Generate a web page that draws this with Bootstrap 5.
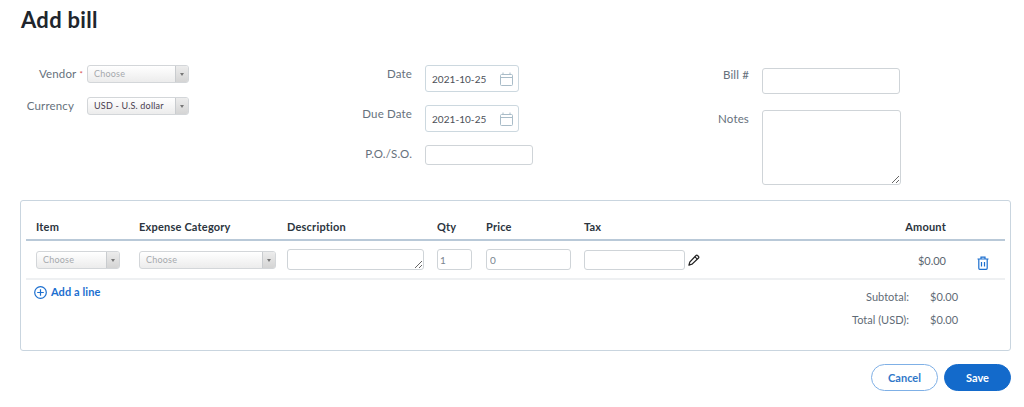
<!doctype html>
<html lang="en"><head><meta charset="utf-8"><title>Add bill</title>
<link href="https://cdn.jsdelivr.net/npm/bootstrap@5.3.0/dist/css/bootstrap.min.css" rel="stylesheet">
<style>
html,body{height:407px;overflow:hidden}
body{font-family:Lato,"Open Sans",sans-serif;background:#fff;color:#4b5563}
.pg{padding:7px 13px 0 20px}
h1.ttl{font-size:22px;font-weight:700;color:#20252c;line-height:25px;margin:0 0 0 1px;letter-spacing:.3px}
.tops{margin-top:33px;height:135px}
.cl1{width:320px}.cl2{width:343px}
.fr{display:flex;align-items:flex-start}
.gv{margin-bottom:14px}
.lb{font-size:11.5px;color:#66717c;text-align:right;flex:none;line-height:14px;letter-spacing:.15px}
.cl1 .lb{width:54px;margin-right:13px;padding-top:2px}
.cl2 .lb{width:72px;margin-right:13px;padding-top:2px}
.cl3 .lb{width:66px;margin-right:13px}
.cl3 .lbn{padding-top:2px}
.req{color:#d9534f;font-size:8px;margin-right:-9px;margin-left:3px;vertical-align:top}
.dd{display:flex;height:18px;width:102px;border:1px solid #d3d6d9;border-radius:3px;background:linear-gradient(#fff,#ececec);font-size:9px;line-height:16px;overflow:hidden}
.ddt{flex:1;padding-left:6px;color:#4a3d4f;letter-spacing:.2px}
.ddt.ph{color:#a6a9ad}
.dda{width:13px;border-left:1px solid #c9cccf;background:linear-gradient(#ececec,#d4d4d4);display:flex;align-items:center;justify-content:center}
.dda::before{content:"";border:2.5px solid transparent;border-top:3px solid #777;border-bottom:0}
.inp{display:block;border:1px solid #cfd4d8;border-radius:3px;background:#fff;padding:0 6px;font-family:inherit;font-size:10px;color:#7a8590;outline:0}
.dt{display:flex;align-items:center;justify-content:space-between;width:94px;height:27px;border-color:#ccd8df;color:#4b4f58;font-size:10px;padding:1px 5px 0 6px;letter-spacing:.05px}
.gp{margin-bottom:13px}
.box{border:1px solid #c9d5df;border-radius:3px;height:151px;padding:0 5px}
.gr{display:grid;grid-template-columns:103px 148px 150px 49px 98px 1fr 59px;padding-left:10px}
.hd{height:40px;border-bottom:2px solid #b9c9d8;font-size:11px;font-weight:700;color:#2c3540;padding-top:19px;line-height:14px;letter-spacing:.2px}
.ln{height:39px;border-bottom:2px solid #eef0f2;padding-top:8px}
.am{text-align:right;font-size:11px;color:#5b6670;padding-top:4px}
.ft{display:flex;justify-content:space-between;padding:4px 0 0 8px}
.add{color:#1c6fcf;font-weight:700;font-size:11px;text-decoration:none;display:flex;align-items:center;gap:4px;height:16px;letter-spacing:.1px}
.tot{display:grid;grid-template-columns:max-content 51px;column-gap:21px;margin-right:24px;font-size:11px;color:#5f6b76;row-gap:9px;line-height:14px;padding-top:6px;justify-items:end}
.tot span:nth-child(even){justify-self:start}
.acts{margin-top:13px;gap:6px}
.bb{width:67px;height:27px;border-radius:14px;font-size:11px;font-weight:700;padding:0;line-height:25px;font-family:inherit}
.bc{background:#fff;border:1px solid #7fb0e6;color:#2f77c9}
.bs{background:#136acb;border:1px solid #136acb;color:#fff}
textarea.inp{resize:both}
.sl{padding-top:2px}
.tri{padding:7px 0 0 31px}
.tri svg,.pn{display:block}
.w1{width:108px;height:20px}.w2{width:138px;height:26px}.w3{width:139px;height:75px}
.w4{width:84px}.w5{width:137px}.w6{width:137px;height:21px}.w7{width:35px;height:21px;padding:0 2px}.w8{width:85px;height:21px;padding:0 3px}.w9{width:101px;height:20px;margin-top:1px}
.m3{margin-top:3px}.m16{margin-top:16px}
.pn{margin:5px 0 0 3px}
</style></head><body>
<div class="pg">
<h1 class="ttl">Add bill</h1>
<div class="tops d-flex">
 <div class="cl1">
  <div class="fr gv"><div class="lb">Vendor<span class="req">*</span></div><div class="dd"><div class="ddt ph">Choose</div><div class="dda"></div></div></div>
  <div class="fr"><div class="lb">Currency</div><div class="dd"><div class="ddt">USD - U.S. dollar</div><div class="dda"></div></div></div>
 </div>
 <div class="cl2">
  <div class="fr gp"><div class="lb">Date</div><div class="inp dt">2021-10-25<svg width="13" height="14" viewBox="0 0 13 14" fill="none" stroke="#a9bcc8"><rect x=".5" y="2.5" width="12" height="11" rx="1"/><path d="M.5 5.5h12M3 .5v2M10 .5v2"/></svg></div></div>
  <div class="fr gp"><div class="lb">Due Date</div><div class="inp dt">2021-10-25<svg width="13" height="14" viewBox="0 0 13 14" fill="none" stroke="#a9bcc8"><rect x=".5" y="2.5" width="12" height="11" rx="1"/><path d="M.5 5.5h12M3 .5v2M10 .5v2"/></svg></div></div>
  <div class="fr"><div class="lb">P.O./S.O.</div><input class="inp w1" aria-label="P.O./S.O."></div>
 </div>
 <div class="cl3">
  <div class="fr m3"><div class="lb">Bill #</div><input class="inp w2" aria-label="Bill"></div>
  <div class="fr m16"><div class="lb lbn">Notes</div><textarea class="inp w3" aria-label="Notes"></textarea></div>
 </div>
</div>
<div class="box">
 <div class="gr hd"><div>Item</div><div>Expense Category</div><div>Description</div><div>Qty</div><div>Price</div><div class="d-flex justify-content-between"><span>Tax</span><span>Amount</span></div><div></div></div>
 <div class="gr ln">
  <div class="sl"><div class="dd w4"><div class="ddt ph">Choose</div><div class="dda"></div></div></div>
  <div class="sl"><div class="dd w5"><div class="ddt ph">Choose</div><div class="dda"></div></div></div>
  <div><textarea class="inp w6" aria-label="Description"></textarea></div>
  <div><input class="inp w7" value="1" aria-label="Qty"></div>
  <div><input class="inp w8" value="0" aria-label="Price"></div>
  <div class="d-flex justify-content-between"><div class="d-flex align-items-start"><input class="inp w9" aria-label="Tax"><svg class="pn" width="12" height="12" viewBox="0 0 12 12" fill="none" stroke="#222" stroke-width="1.2"><path d="M1 11l.8-3L8 1.5a1 1 0 0 1 1.5 0l1 1a1 1 0 0 1 0 1.5L4 10.2z"/><path d="M1 11l1.6-.5M7 2.8l2.3 2.3"/></svg></div><div class="am">$0.00</div></div>
  <div class="tri"><svg width="12" height="14" viewBox="0 0 12 14" fill="none" stroke="#1c6fcf" stroke-width="1.2"><path d="M.5 3h11M4 3V1.2h4V3M1.8 3v9.3a1 1 0 0 0 1 1h6.4a1 1 0 0 0 1-1V3"/><path d="M4.5 6v4.5M7.5 6v4.5"/></svg></div>
 </div>
 <div class="ft">
  <a class="add" href="#"><svg width="13" height="13" viewBox="0 0 13 13" fill="none" stroke="#1c6fcf" stroke-width="1.2"><circle cx="6.5" cy="6.5" r="5.8"/><path d="M6.5 3.2v6.6M3.2 6.5h6.6"/></svg>Add a line</a>
  <div class="tot"><span>Subtotal:</span><span>$0.00</span><span>Total (USD):</span><span>$0.00</span></div>
 </div>
</div>
<div class="d-flex justify-content-end acts"><button class="bb bc">Cancel</button><button class="bb bs">Save</button></div>
</div>
</body></html>
